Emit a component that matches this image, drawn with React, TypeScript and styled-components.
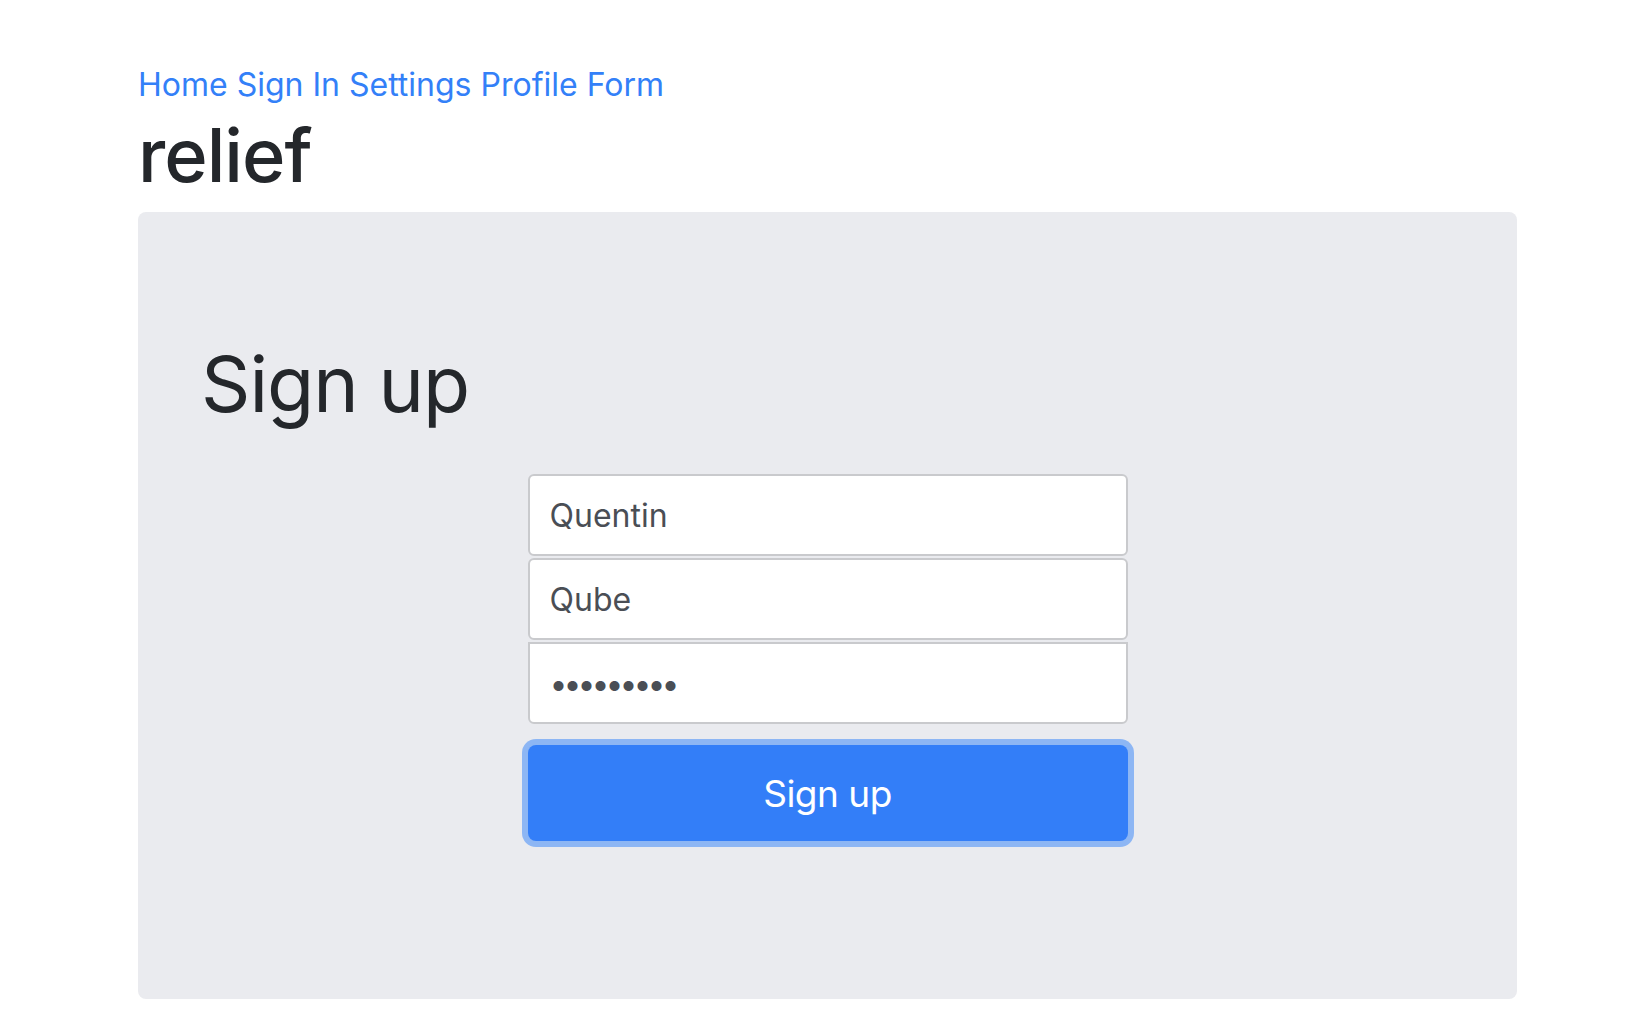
import React, { ReactElement } from 'react';
import styled, { createGlobalStyle } from 'styled-components';

const GlobalStyle = createGlobalStyle`
  body {
    margin: 0;
    background: #fff;
    font-family: Inter, "Noto Sans", "Liberation Sans", sans-serif;
    color: #24272b;
  }
`;

const links = ['Home', 'Sign In', 'Settings', 'Profile', 'Form'];

const App = (): ReactElement => {
  return (
    <>
      <GlobalStyle />
      <Page>
        <Nav>
          {links.map((link) => (
            <NavLink key={link} href="#">
              {link}
            </NavLink>
          ))}
        </Nav>
        <Brand>relief</Brand>
        <Jumbotron>
          <Heading>Sign up</Heading>
          <Form onSubmit={(e) => e.preventDefault()}>
            <Input type="text" defaultValue="Quentin" />
            <Input type="text" defaultValue="Qube" />
            <Input type="password" defaultValue="123456789" $squareTop />
            <Button type="submit">Sign up</Button>
          </Form>
        </Jumbotron>
      </Page>
    </>
  );
};

const Page = styled.div`
  padding: 63px 115px 25px 138px;
`;

const Nav = styled.nav`
  display: flex;
  gap: 9px;
  height: 44px;
  line-height: 44px;
  font-size: 32px;
`;

const NavLink = styled.a`
  color: #3380f8;
  text-decoration: none;
`;

const Brand = styled.h1`
  margin: 4px 0 12px;
  font-size: 74px;
  font-weight: 500;
  line-height: 1.2;
  letter-spacing: -1px;
  color: #24272b;
`;

const Jumbotron = styled.section`
  box-sizing: border-box;
  min-height: 787px;
  padding: 126px 63px 60px;
  background: #eaebef;
  border-radius: 8px;
`;

const Heading = styled.h2`
  margin: 0 0 44px;
  font-size: 77px;
  font-weight: 400;
  line-height: 1.2;
  letter-spacing: -1px;
  color: #24272b;
`;

const Form = styled.form`
  display: flex;
  flex-direction: column;
  gap: 2px;
  width: 600px;
  margin: 0 auto;
`;

const Input = styled.input<{ $squareTop?: boolean }>`
  box-sizing: border-box;
  height: 82px;
  padding: 0 20px;
  font-family: inherit;
  font-size: 32px;
  letter-spacing: ${({ type }) => (type === 'password' ? '-4px' : '0')};
  color: #4a4e55;
  background: #fff;
  border: 2px solid #c9cacd;
  border-radius: ${({ $squareTop }) => ($squareTop ? '0 0 6px 6px' : '6px')};
  outline: none;
`;

const Button = styled.button`
  height: 96px;
  margin-top: 19px;
  font-family: inherit;
  font-size: 37px;
  letter-spacing: -0.5px;
  color: #fff;
  background: #337ef8;
  border: none;
  border-radius: 8px;
  box-shadow: 0 0 0 6px #8db6f4;
  cursor: pointer;
`;

export default App;
